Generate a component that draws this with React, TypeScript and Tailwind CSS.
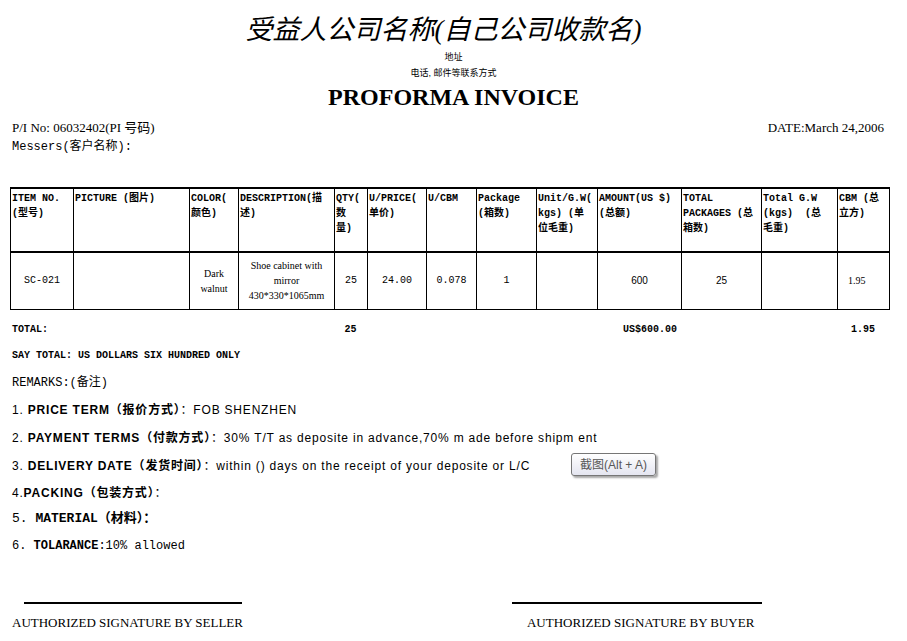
import React from 'react'

const cjk = '"Noto Sans CJK SC"'
const serif = `"Liberation Serif", ${cjk}, serif`
const mono = `"Liberation Mono", ${cjk}, monospace`
const sans = `"Liberation Sans", ${cjk}, sans-serif`

const headers = [
    ['ITEM NO.', '(型号)'],
    ['PICTURE (图片)'],
    ['COLOR(', '颜色)'],
    ['DESCRIPTION(描', '述)'],
    ['QTY(', '数', '量)'],
    ['U/PRICE(', '单价)'],
    ['U/CBM'],
    ['Package', '(箱数)'],
    ['Unit/G.W(', 'kgs) (单', '位毛重)'],
    ['AMOUNT(US $)', '(总额)'],
    ['TOTAL', 'PACKAGES (总', '箱数)'],
    ['Total G.W', '(kgs)  (总', '毛重)'],
    ['CBM (总', '立方)'],
]

const widths = [63, 116, 49, 96, 33, 59, 50, 60, 61, 84, 80, 76, 52]

const remarks = [
    { n: '1. ', b: 'PRICE TERM（报价方式）', t: '：FOB SHENZHEN', mt: '' },
    { n: '2. ', b: 'PAYMENT TERMS（付款方式）', t: '：30% T/T as deposite in advance,70% m ade before shipm ent', mt: '' },
    { n: '3. ', b: 'DELIVERY DATE（发货时间）', t: '：within () days on the receipt of your deposite or L/C', mt: '' },
    { n: '4.', b: 'PACKING（包装方式）', t: '：', mt: '-mt-[1px]' },
]

export default function App() {
    return (
        <div className="relative w-[907px] h-[641px] bg-white text-black overflow-hidden">
            {/* company header */}
            <div className="flex flex-col items-center pt-[12px]">
                <div className="text-[27px] leading-[36px] italic pr-[20px]" style={{ fontFamily: serif }}>
                    受益人公司名称(自己公司收款名)
                </div>
                <div className="text-[9px] leading-[14px] mt-[2px]" style={{ fontFamily: sans }}>地址</div>
                <div className="text-[9px] leading-[14px] mt-[2px]" style={{ fontFamily: sans }}>电话, 邮件等联系方式</div>
                <div className="text-[24px] leading-[28px] font-bold mt-[3px]" style={{ fontFamily: serif }}>
                    PROFORMA INVOICE
                </div>
            </div>

            <div className="px-[12px] mt-[8px]">
                <div className="flex justify-between pr-[11px] text-[13px] leading-[17px]" style={{ fontFamily: serif }}>
                    <span>P/I No: 06032402(PI 号码)</span>
                    <span>DATE:March 24,2006</span>
                </div>
                <div className="text-[12px] leading-[17px] mt-[3px]" style={{ fontFamily: mono }}>Messers(客户名称):</div>
            </div>

            {/* goods table */}
            <div className="pl-[10px] mt-[31px]">
                <table className="border-collapse table-fixed w-[879px]">
                    <colgroup>
                        {widths.map((w, i) => (
                            <col key={i} style={{ width: w }} />
                        ))}
                    </colgroup>
                    <thead>
                        <tr className="h-[64px] border-t-2 border-b-2 border-black">
                            {headers.map((lines, i) => (
                                <th
                                    key={i}
                                    className="border-x border-black align-top text-left font-bold text-[10px] leading-[15px] px-[1px] pt-[2px]"
                                    style={{ fontFamily: mono }}
                                >
                                    {lines.map((l, j) => (
                                        <div key={j} className="whitespace-pre">{l}</div>
                                    ))}
                                </th>
                            ))}
                        </tr>
                    </thead>
                    <tbody>
                        <tr className="h-[57px] border-b border-black text-center text-[10px] leading-[15px]">
                            <td className="border-x border-black" style={{ fontFamily: mono }}>SC-021</td>
                            <td className="border-x border-black"></td>
                            <td className="border-x border-black" style={{ fontFamily: serif }}>Dark<br />walnut</td>
                            <td className="border-x border-black" style={{ fontFamily: serif }}>Shoe cabinet with<br />mirror<br />430*330*1065mm</td>
                            <td className="border-x border-black" style={{ fontFamily: mono }}>25</td>
                            <td className="border-x border-black" style={{ fontFamily: mono }}>24.00</td>
                            <td className="border-x border-black" style={{ fontFamily: mono }}>0.078</td>
                            <td className="border-x border-black" style={{ fontFamily: mono }}>1</td>
                            <td className="border-x border-black"></td>
                            <td className="border-x border-black" style={{ fontFamily: sans }}>600</td>
                            <td className="border-x border-black" style={{ fontFamily: sans }}>25</td>
                            <td className="border-x border-black"></td>
                            <td className="border-x border-black pl-[10px] text-left" style={{ fontFamily: serif }}>1.95</td>
                        </tr>
                    </tbody>
                </table>

                <div
                    className="grid grid-cols-[63px_116px_49px_96px_33px_59px_50px_60px_61px_84px_80px_76px_52px] mt-[12px] text-[10px] leading-[16px] font-bold"
                    style={{ fontFamily: mono }}
                >
                    <div className="col-span-4 pl-[2px]">TOTAL:</div>
                    <div className="text-center">25</div>
                    <div className="col-span-4"></div>
                    <div className="col-span-3 pl-[26px]">US$600.00</div>
                    <div className="pl-[14px]">1.95</div>
                </div>
            </div>

            <div className="px-[12px]">
                <div className="mt-[10px] text-[10px] leading-[16px] font-bold" style={{ fontFamily: mono }}>
                    SAY TOTAL: US DOLLARS SIX HUNDRED ONLY
                </div>
                <div className="mt-[11px] text-[12px] leading-[16px]" style={{ fontFamily: mono }}>REMARKS:(备注)</div>

                <div className="mt-[11px] flex flex-col gap-[12px]">
                    {remarks.map((r, i) => (
                        <div key={i} className={`text-[12px] leading-[16px] tracking-[0.8px] whitespace-pre ${r.mt}`} style={{ fontFamily: sans }}>
                            {r.n}
                            <span className="font-bold">{r.b}</span>
                            {r.t}
                        </div>
                    ))}
                    <div className="text-[13px] leading-[16px] -mt-[2px]" style={{ fontFamily: mono }}>
                        5. <span className="font-bold">MATERIAL（材料）：</span>
                    </div>
                    <div className="text-[12px] leading-[16px] -mt-[1px]" style={{ fontFamily: mono }}>
                        6. <span className="font-bold">TOLARANCE</span>:10% allowed
                    </div>
                </div>
            </div>

            {/* signatures */}
            <div className="flex mt-[48px] text-[13px] leading-[16px]" style={{ fontFamily: serif }}>
                <div className="ml-[12px] flex flex-col">
                    <div className="ml-[12px] w-[218px] h-[2px] bg-black"></div>
                    <div className="mt-[11px]">AUTHORIZED SIGNATURE BY SELLER</div>
                </div>
                <div className="ml-[269px] flex flex-col">
                    <div className="w-[250px] h-[2px] bg-black"></div>
                    <div className="mt-[11px] ml-[15px]">AUTHORIZED SIGNATURE BY BUYER</div>
                </div>
            </div>

            {/* screenshot tooltip */}
            <div
                className="absolute left-[571px] top-[453px] w-[85px] h-[23px] flex items-center justify-center rounded-[3px] border border-[#767676] bg-gradient-to-b from-white to-[#e4e5f0] shadow-[2px_2px_2px_rgba(0,0,0,0.35)] text-[12px] text-[#575757]"
                style={{ fontFamily: sans }}
            >
                截图(Alt + A)
            </div>
        </div>
    )
}
